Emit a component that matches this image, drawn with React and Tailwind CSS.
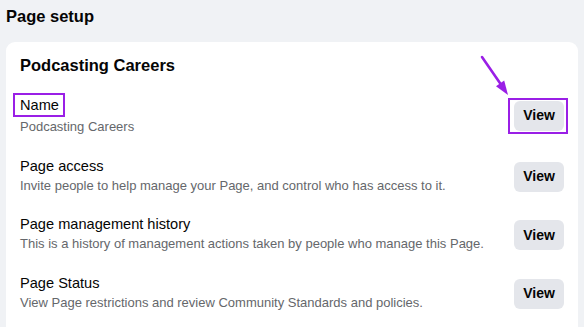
import React from 'react';

const rows = [
  { title: 'Name', desc: 'Podcasting Careers', highlight: true },
  { title: 'Page access', desc: 'Invite people to help manage your Page, and control who has access to it.' },
  { title: 'Page management history', desc: 'This is a history of management actions taken by people who manage this Page.' },
  { title: 'Page Status', desc: 'View Page restrictions and review Community Standards and policies.' },
];

const App = () => {
  return (
    <div className="w-[584px] h-[327px] overflow-hidden bg-[#f0f2f5] text-[#050505]" style={{ fontFamily: '"Liberation Sans", Arial, sans-serif' }}>
      <h1 className="px-[6px] pt-[5px] h-[42px] text-[16.5px] font-bold leading-[22px]">Page setup</h1>
      <div className="relative ml-[6px] w-[572px] bg-white rounded-t-[9px] px-[14px] pt-[12px] pb-6">
        <h2 className="text-[16.5px] font-bold leading-[22px] mb-[17px]">Podcasting Careers</h2>
        {/* annotation arrow */}
        <svg className="absolute left-[472px] top-[12px]" width="40" height="44" viewBox="0 0 40 44">
          <line x1="4" y1="3" x2="24" y2="32" stroke="#9a1fe6" strokeWidth="2.6" strokeLinecap="round" />
          <polygon points="30,41 26.2,26.6 18,32.2" fill="#9a1fe6" />
        </svg>
        <div className="flex flex-col gap-[18.5px]">
          {rows.map((row) => (
            <div className="flex items-center justify-between" key={row.title}>
              <div>
                <div className="text-[14.6px] leading-[20px]">
                  {row.highlight ? (
                    <span className="inline-block -ml-[7px] pl-[5px] pr-[4px] border-2 border-[#9a1fe6] leading-[20px]">{row.title}</span>
                  ) : (
                    row.title
                  )}
                </div>
                <div className="text-[13px] leading-[20px] text-[#65676b]">{row.desc}</div>
              </div>
              <div className={row.highlight ? 'pl-[4px] pr-[2px] py-[1px] border-2 border-[#9a1fe6] -mr-[4px] mt-[1px]' : 'mt-[2px]'}>
                <button className="w-[50px] h-[30px] rounded-[6px] bg-[#e4e6eb] text-[14px] font-bold">View</button>
              </div>
            </div>
          ))}
        </div>
      </div>
    </div>
  );
};

export default App;
